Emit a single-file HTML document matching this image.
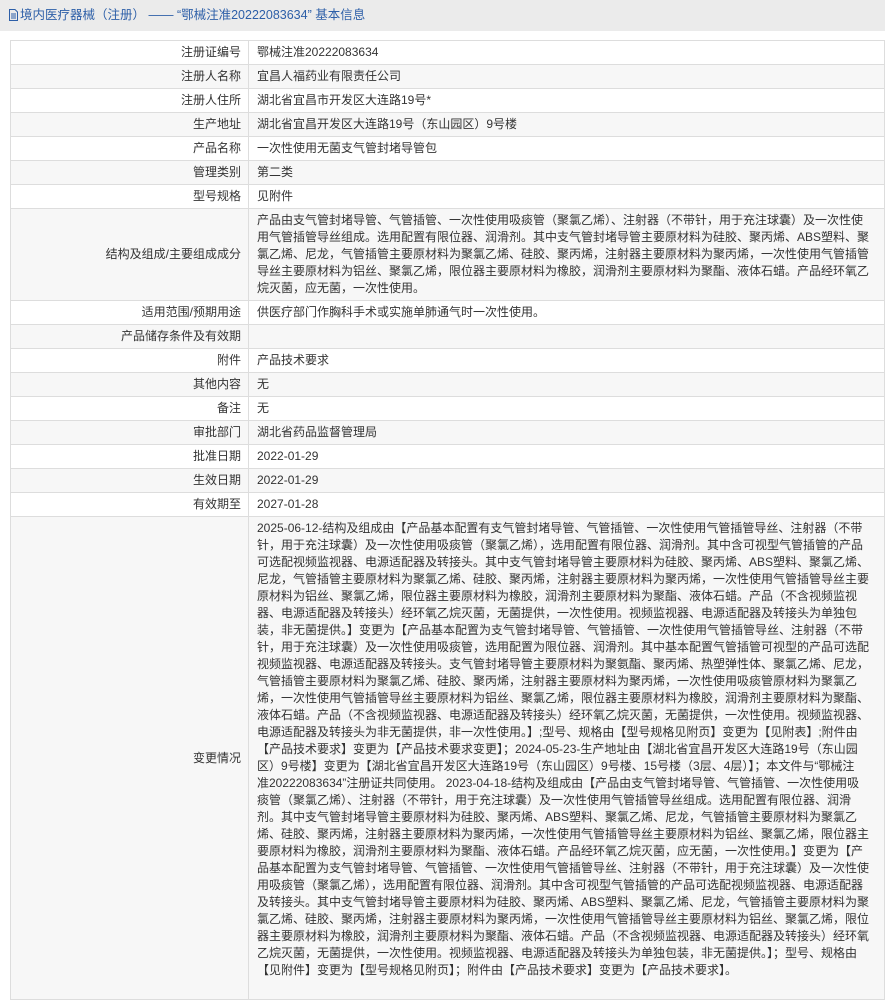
<!DOCTYPE html>
<html><head><meta charset="utf-8"><style>
html,body{margin:0;padding:0;background:#fff;}
body{width:885px;height:864px;overflow:hidden;font-family:"Liberation Sans","Noto Sans CJK SC",sans-serif;font-size:12px;color:#333;}
.hd{height:31px;background:#ebebeb;line-height:31px;padding-left:8px;color:#2d5fa8;font-size:12.5px;white-space:nowrap;}
.hd svg{vertical-align:-2px;margin-right:1px}
table{position:absolute;left:10px;top:40px;width:875px;border-collapse:collapse;}
td{border:1px solid #ddd;padding:3px 8px;line-height:17px;vertical-align:middle;}
td.l{width:222px;text-align:right;padding-right:7px;}
tr:nth-child(even) td{background:#f7f7f7;}
.v{white-space:nowrap;}
</style></head><body>
<div class="hd"><svg width="11" height="12" viewBox="0 0 11 12"><path d="M1.5 .5h5.5l2.5 2.5v8.5h-8z" fill="none" stroke="#2d5fa8"/><path d="M3 5h5M3 7h5M3 9h5" stroke="#2d5fa8"/></svg>境内医疗器械（注册） ——  “鄂械注准20222083634” 基本信息</div>
<table>
<tr><td class="l">注册证编号</td><td>鄂械注准20222083634</td></tr>
<tr><td class="l">注册人名称</td><td>宜昌人福药业有限责任公司</td></tr>
<tr><td class="l">注册人住所</td><td>湖北省宜昌市开发区大连路19号*</td></tr>
<tr><td class="l">生产地址</td><td>湖北省宜昌开发区大连路19号（东山园区）9号楼</td></tr>
<tr><td class="l">产品名称</td><td>一次性使用无菌支气管封堵导管包</td></tr>
<tr><td class="l">管理类别</td><td>第二类</td></tr>
<tr><td class="l">型号规格</td><td>见附件</td></tr>
<tr><td class="l">结构及组成/主要组成成分</td><td class="v">产品由支气管封堵导管、气管插管、一次性使用吸痰管（聚氯乙烯）、注射器（不带针，用于充注球囊）及一次性使<br>用气管插管导丝组成。选用配置有限位器、润滑剂。其中支气管封堵导管主要原材料为硅胶、聚丙烯、ABS塑料、聚<br>氯乙烯、尼龙，气管插管主要原材料为聚氯乙烯、硅胶、聚丙烯，注射器主要原材料为聚丙烯，一次性使用气管插管<br>导丝主要原材料为铝丝、聚氯乙烯，限位器主要原材料为橡胶，润滑剂主要原材料为聚酯、液体石蜡。产品经环氧乙<br>烷灭菌，应无菌，一次性使用。</td></tr>
<tr><td class="l">适用范围/预期用途</td><td>供医疗部门作胸科手术或实施单肺通气时一次性使用。</td></tr>
<tr><td class="l">产品储存条件及有效期</td><td>&nbsp;</td></tr>
<tr><td class="l">附件</td><td>产品技术要求</td></tr>
<tr><td class="l">其他内容</td><td>无</td></tr>
<tr><td class="l">备注</td><td>无</td></tr>
<tr><td class="l">审批部门</td><td>湖北省药品监督管理局</td></tr>
<tr><td class="l">批准日期</td><td>2022-01-29</td></tr>
<tr><td class="l">生效日期</td><td>2022-01-29</td></tr>
<tr><td class="l">有效期至</td><td>2027-01-28</td></tr>
<tr><td class="l">变更情况</td><td class="v">2025-06-12-结构及组成由【产品基本配置有支气管封堵导管、气管插管、一次性使用气管插管导丝、注射器（不带<br>针，用于充注球囊）及一次性使用吸痰管（聚氯乙烯），选用配置有限位器、润滑剂。其中含可视型气管插管的产品<br>可选配视频监视器、电源适配器及转接头。其中支气管封堵导管主要原材料为硅胶、聚丙烯、ABS塑料、聚氯乙烯、<br>尼龙，气管插管主要原材料为聚氯乙烯、硅胶、聚丙烯，注射器主要原材料为聚丙烯，一次性使用气管插管导丝主要<br>原材料为铝丝、聚氯乙烯，限位器主要原材料为橡胶，润滑剂主要原材料为聚酯、液体石蜡。产品（不含视频监视<br>器、电源适配器及转接头）经环氧乙烷灭菌，无菌提供，一次性使用。视频监视器、电源适配器及转接头为单独包<br>装，非无菌提供。】变更为【产品基本配置为支气管封堵导管、气管插管、一次性使用气管插管导丝、注射器（不带<br>针，用于充注球囊）及一次性使用吸痰管，选用配置为限位器、润滑剂。其中基本配置气管插管可视型的产品可选配<br>视频监视器、电源适配器及转接头。支气管封堵导管主要原材料为聚氨酯、聚丙烯、热塑弹性体、聚氯乙烯、尼龙，<br>气管插管主要原材料为聚氯乙烯、硅胶、聚丙烯，注射器主要原材料为聚丙烯，一次性使用吸痰管原材料为聚氯乙<br>烯，一次性使用气管插管导丝主要原材料为铝丝、聚氯乙烯，限位器主要原材料为橡胶，润滑剂主要原材料为聚酯、<br>液体石蜡。产品（不含视频监视器、电源适配器及转接头）经环氧乙烷灭菌，无菌提供，一次性使用。视频监视器、<br>电源适配器及转接头为非无菌提供，非一次性使用。】;型号、规格由【型号规格见附页】变更为【见附表】;附件由<br>【产品技术要求】变更为【产品技术要求变更】；2024-05-23-生产地址由【湖北省宜昌开发区大连路19号（东山园<br>区）9号楼】变更为【湖北省宜昌开发区大连路19号（东山园区）9号楼、15号楼（3层、4层）】；本文件与“鄂械注<br>准20222083634”注册证共同使用。 2023-04-18-结构及组成由【产品由支气管封堵导管、气管插管、一次性使用吸<br>痰管（聚氯乙烯）、注射器（不带针，用于充注球囊）及一次性使用气管插管导丝组成。选用配置有限位器、润滑<br>剂。其中支气管封堵导管主要原材料为硅胶、聚丙烯、ABS塑料、聚氯乙烯、尼龙，气管插管主要原材料为聚氯乙<br>烯、硅胶、聚丙烯，注射器主要原材料为聚丙烯，一次性使用气管插管导丝主要原材料为铝丝、聚氯乙烯，限位器主<br>要原材料为橡胶，润滑剂主要原材料为聚酯、液体石蜡。产品经环氧乙烷灭菌，应无菌，一次性使用。】变更为【产<br>品基本配置为支气管封堵导管、气管插管、一次性使用气管插管导丝、注射器（不带针，用于充注球囊）及一次性使<br>用吸痰管（聚氯乙烯），选用配置有限位器、润滑剂。其中含可视型气管插管的产品可选配视频监视器、电源适配器<br>及转接头。其中支气管封堵导管主要原材料为硅胶、聚丙烯、ABS塑料、聚氯乙烯、尼龙，气管插管主要原材料为聚<br>氯乙烯、硅胶、聚丙烯，注射器主要原材料为聚丙烯，一次性使用气管插管导丝主要原材料为铝丝、聚氯乙烯，限位<br>器主要原材料为橡胶，润滑剂主要原材料为聚酯、液体石蜡。产品（不含视频监视器、电源适配器及转接头）经环氧<br>乙烷灭菌，无菌提供，一次性使用。视频监视器、电源适配器及转接头为单独包装，非无菌提供。】；型号、规格由<br>【见附件】变更为【型号规格见附页】；附件由【产品技术要求】变更为【产品技术要求】。<br>&nbsp;</td></tr>
</table>
</body></html>
